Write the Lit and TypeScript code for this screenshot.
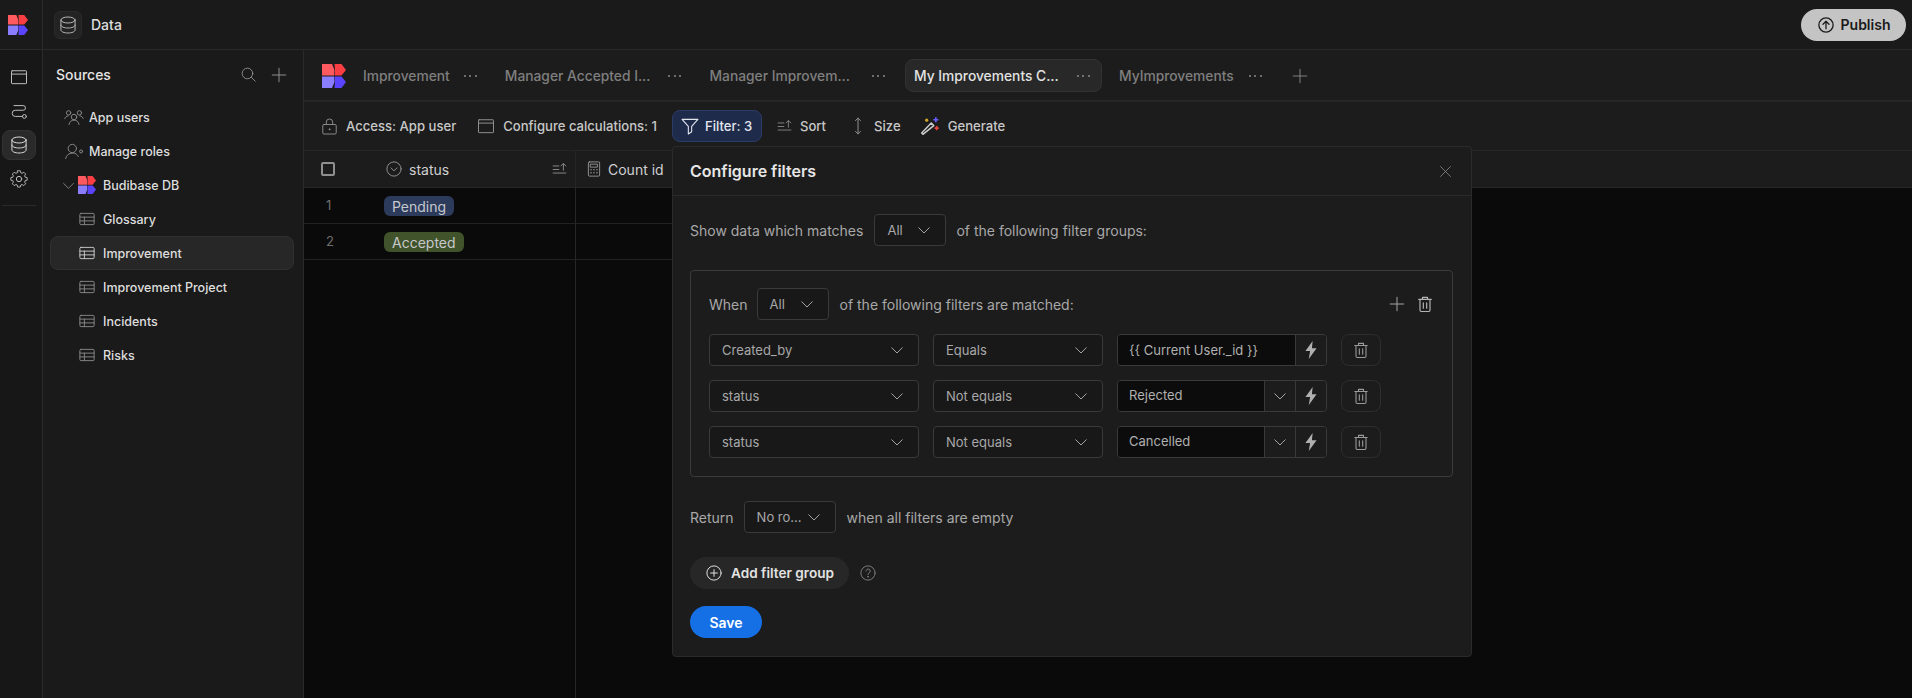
import { LitElement, html, css, svg } from "lit";
import { customElement } from "lit/decorators.js";

const ic = (size: number, body: unknown, color = "currentColor", sw = 1.2) => html`<svg class="ic" width=${size} height=${size} viewBox="0 0 24 24" fill="none" stroke=${color} stroke-width=${sw} stroke-linecap="round" stroke-linejoin="round">${body}</svg>`;

const dbP = svg`<ellipse cx="12" cy="6" rx="8.5" ry="3.6"/><path d="M3.5 6v6c0 2 3.8 3.6 8.5 3.6s8.5-1.6 8.5-3.6V6"/><path d="M3.5 12v6c0 2 3.8 3.6 8.5 3.6s8.5-1.6 8.5-3.6v-6"/>`;
const browserP = svg`<rect x="3" y="4.500" width="18" height="15.500" rx=".8"/><path d="M3 8.500h18"/>`;
const pathP = svg`<path d="M6 5.500h11a2.800 2.800 0 0 1 0 5.600H7.500a3.700 3.700 0 0 0 0 7.400H16"/><circle cx="18.500" cy="18.500" r="2.300"/>`;
const gearP = svg`<circle cx="12" cy="12" r="3.200"/><path d="M10.300 2.800h3.400l.6 2.600 1.700.7 2.300-1.400 2.400 2.400-1.400 2.300.7 1.700 2.600.6v3.400l-2.600.6-.7 1.700 1.400 2.300-2.400 2.400-2.300-1.400-1.700.7-.6 2.600h-3.400l-.6-2.600-1.700-.7-2.300 1.400-2.400-2.400 1.400-2.300-.7-1.700-2.600-.6v-3.400l2.600-.6.7-1.700-1.400-2.300 2.400-2.400 2.300 1.400 1.700-.7z" transform="translate(12 12) scale(.92) translate(-12 -13.500)"/>`;
const searchP = svg`<circle cx="10.500" cy="10.500" r="7.500"/><path d="M16 16l5.500 5.500"/>`;
const plusP = svg`<path d="M12 3v18M3 12h18"/>`;
const tableP = svg`<rect x="2.500" y="4.500" width="19" height="15" rx="1.500"/><path d="M2.500 9.500h19M2.500 14.500h19M8.500 9.500v10"/>`;
const chevP = svg`<path d="M5 9l7 7 7-7"/>`;
const lockP = svg`<rect x="3.500" y="9.500" width="17" height="12" rx="1.500"/><path d="M8 9.500V6.500a4 4 0 0 1 8 0v3"/><circle cx="12" cy="15.500" r=".6" fill="currentColor"/>`;
const filterP = svg`<path d="M2.500 4h19l-7.500 8.500V19l-4 2.500v-9z"/>`;
const sortP = svg`<path d="M3 7h8M3 12h8M3 17h18M17.500 13V4M14 7l3.500-3.500L21 7"/>`;
const sizeP = svg`<path d="M12 2.500v19M9 5.500l3-3 3 3M9 18.500l3 3 3-3"/>`;
const trashP = svg`<path d="M4.500 6.500h15M9 6.500V4h6v2.500M6 6.500v13a1.500 1.500 0 0 0 1.500 1.500h9a1.500 1.500 0 0 0 1.500-1.500v-13"/><path d="M10 10.500v6.500M14 10.500v6.500"/>`;
const closeP = svg`<path d="M4 4l16 16M20 4L4 20"/>`;
const plusCircP = svg`<circle cx="12" cy="12" r="9.500"/><path d="M12 7.500v9M7.500 12h9"/>`;
const helpP = svg`<circle cx="12" cy="12" r="9.500"/><path d="M9.300 9.500a2.800 2.800 0 1 1 4.300 2.300c-1 .7-1.600 1.200-1.600 2.400"/><circle cx="12" cy="17" r=".5" fill="currentColor"/>`;
const upP = svg`<circle cx="12" cy="12" r="9.500"/><path d="M12 17V7.500M8 11l4-4 4 4"/>`;
const usersP = svg`<circle cx="12" cy="12" r="3.300"/><path d="M6 21c.5-3.500 3-5.200 6-5.200s5.500 1.700 6 5.200"/><circle cx="5.500" cy="7" r="2.600"/><circle cx="18.500" cy="7" r="2.600"/><path d="M1 14c.4-2 2-3.300 4-3.300M23 14c-.4-2-2-3.300-4-3.300"/>`;
const roleP = svg`<circle cx="10" cy="9" r="5"/><path d="M2 21c.8-4 4-6.500 8-6.500s6.200 1.500 7 4"/><circle cx="20.500" cy="12.500" r="1.800"/>`;
const calcP = svg`<rect x="4.500" y="2.500" width="15" height="19" rx="1.500"/><rect x="7.500" y="5.500" width="9" height="4"/><path d="M8 13h.01M12 13h.01M16 13h.01M8 17h.01M12 17h.01M16 17h.01" stroke-width="2"/>`;
const statusP = svg`<circle cx="12" cy="12" r="9.500"/><path d="M8 10.500l4 4 4-4"/>`;

const boltIcon = html`<svg class="ic" width="18" height="20" viewBox="0 0 16 18"><path d="M9.500 1L3 10h4.200L6 17l7-9.500H8.800z" fill="#b0b0b0"/></svg>`;

const logo = (s: number) => html`<svg class="ic" width=${s} height=${s} viewBox="0 0 24 24">
  <path d="M0 0h10l2.500 6-.5 5.500H0z" fill="#FF5A5F"/><path d="M12.500 0h7l4.500 6-4.500 5.500h-7L13 6z" fill="#F83E43"/>
  <path d="M0 12.500h12l.5 5.500-2.500 6H0z" fill="#8B7DFF"/><path d="M12.500 12.500h7L24 18l-4.500 6h-7L13 18z" fill="#5B44FF"/>
</svg>`;

@customElement("app-root")
export class AppRoot extends LitElement {
  static styles = css`
    :host { display: block; width: 1912px; height: 698px; overflow: hidden; position: relative; font-family: Inter, "Noto Sans", sans-serif; color: #d6d6d6; background: #1a1a1a; font-size: 14px; }
    .ic { display: block; flex: none; }
    .top { height: 49px; display: flex; align-items: center; border-bottom: 1px solid #2a2a2a; }
    .top-logo { height: 49px; display: flex; align-items: center; padding-left: 8px; box-sizing: border-box; border-right: 1px solid #2a2a2a; flex: none; width: 43px; }
    .data-btn { width: 26px; height: 26px; margin-left: 11px; border: 1px solid #2a2a2a; background: #232323; border-radius: 6px; display: flex; align-items: center; justify-content: center; color: #b5b5b5; }
    .data-label { margin-left: 9px; font-size: 14px; font-weight: 500; color: #dedede; }
    .publish { margin-left: auto; margin-right: 6px; width: 105px; height: 32px; border-radius: 16px; background: #c4c4c4; color: #1a1a1a; display: flex; align-items: center; justify-content: center; gap: 6px; font-weight: 600; font-size: 14px; }
    .body { display: flex; height: 648px; }
    .rail { width: 42px; border-right: 1px solid #2a2a2a; background: #171717; flex: none; box-sizing: content-box; display: flex; flex-direction: column; align-items: flex-start; padding-top: 12px; color: #bcbcbc; }
    .rail-item { width: 34px; height: 30px; margin: 0 0 4px 2px; display: flex; align-items: center; justify-content: center; border-radius: 8px; border: 1px solid transparent; box-sizing: border-box; }
    .rail-item.on { background: #2a2a2a; border-color: #333; color: #d8d8d8; }
    .rail-div { width: 34px; height: 1px; background: #2a2a2a; margin: 7px 0 0 2px; }
    .side { width: 260px; border-right: 1px solid #2a2a2a; flex: none; box-sizing: content-box; background: #1a1a1a; }
    .side-head { display: flex; align-items: center; height: 49px; margin-bottom: 1px; padding: 0 15px 0 13px; color: #e4e4e4; font-size: 14px; font-weight: 500; }
    .side-head span { flex: 1; }
    .side-head .ic { color: #9a9a9a; }
    .side-head .ic + .ic { margin-left: 13px; }
    .list { display: flex; flex-direction: column; padding: 0 9px 0 7px; }
    .item { height: 34px; display: flex; align-items: center; font-size: 12.500px; color: #dedede; border: 1px solid transparent; border-radius: 8px; box-sizing: border-box; font-weight: 500; }
    .item .ic { color: #8d8d8d; }
    .item.on { background: #272727; border-color: #303030; }
    .item.on .ic { color: #d4d4d4; }
    .main { flex: 1; min-width: 0; display: flex; flex-direction: column; background: #0a0a0a; }
    .tabs { flex: none; background: #1c1c1c; border-bottom: 2px solid #262626; display: flex; align-items: center; padding: 1px 0 0 18px; box-sizing: border-box; height: 52px; }
    .tab { display: flex; align-items: center; height: 33px; font-size: 13.800px; color: #7f7f7f; border: 1px solid transparent; border-radius: 8px; box-sizing: border-box; padding: 0 8px; font-weight: 500; flex: none; }
    .tab.on { background: #282828; border-color: #323232; color: #e2e2e2; font-weight: 450; }
    .dots { display: flex; gap: 3.500px; color: #8a8a8a; margin-left: 14px; }
    .dots i { width: 2px; height: 2px; border-radius: 50%; background: currentColor; display: block; }
    .tool { height: 48px; flex: none; background: #1c1c1c; border-bottom: 1px solid #262626; display: flex; align-items: center; padding-left: 16px; font-size: 13.100px; font-weight: 500; color: #c8c8c8; }
    .tbtn { display: flex; align-items: center; gap: 7px; height: 32px; color: #c8c8c8; flex: none; }
    .tbtn .ic { color: #8f8f8f; }
    .tbtn.filter { width: 90px; gap: 5px; background: #1f2b4b; border: 1px solid #2c3c68; border-radius: 8px; box-sizing: border-box; padding: 0 0 0 7px; color: #e3e6ee; }
    .tbtn.filter .ic { color: #e3e6ee; }
    .grid { flex: 1; display: flex; min-height: 0; }
    .col { flex: none; display: flex; flex-direction: column; }
    .col.status { border-right: 1px solid #262626; }
    .hcell { height: 36px; flex: none; box-sizing: content-box; background: #1c1c1c; border-bottom: 1px solid #262626; display: flex; align-items: center; font-size: 14px; color: #cfcfcf; }
    .rcell { height: 36px; box-sizing: border-box; border-bottom: 1px solid #222; display: flex; align-items: center; font-size: 13px; color: #6f6f6f; }
    .rcell.num { padding: 0 0 1px 22px; }
    .check { width: 14px; height: 14px; border: 2px solid #8f8f8f; border-radius: 2px; box-sizing: border-box; margin-left: 17px; }
    .pill { height: 20px; border-radius: 6px; padding: 0 8px; display: flex; align-items: center; font-size: 14px; color: #c6c8cc; margin: 1px 0 0 8px; }
    .pill.blue { background: #2c3b5c; }
    .pill.green { background: #41532b; }
    .modal { position: absolute; left: 672px; top: 146px; width: 800px; height: 511px; box-sizing: border-box; background: #1c1c1c; border: 1px solid #2a2a2a; border-radius: 4px; display: flex; flex-direction: column; }
    .m-head { height: 48px; flex: none; border-bottom: 1px solid #2a2a2a; display: flex; align-items: center; justify-content: space-between; padding: 0 18px 0 17px; font-size: 16px; font-weight: 600; color: #e6e6e6; }
    .m-head .ic { color: #8f8f8f; }
    .m-body { padding: 18px 18px 0 17px; display: flex; flex-direction: column; font-size: 14px; color: #a8a8a8; }
    .line { display: flex; align-items: center; gap: 11px; height: 32px; }
    .line.show .sel { margin-right: -1px; }
    .sel { display: flex; align-items: center; justify-content: space-between; height: 32px; box-sizing: border-box; border: 1px solid #3a3a3a; border-radius: 4px; background: #181818; padding: 0 12px; font-size: 13px; color: #a8a8a8; flex: none; }
    .sel .ic { color: #a8a8a8; }
    .group { margin-top: 24px; height: 207px; box-sizing: border-box; border: 1px solid #3a3a3a; border-radius: 4px; padding: 17px 17px 0 18px; }
    .group .line { font-size: 14px; color: #a8a8a8; gap: 11px; }
    .when { margin-right: -2px; }
    .group-acts { margin-left: auto; display: flex; gap: 9px; align-items: center; color: #a8a8a8; }
    .frow { display: flex; gap: 14px; margin-top: 14px; height: 32px; }
    .val { width: 210px; height: 32px; box-sizing: border-box; border: 1px solid #3a3a3a; border-radius: 4px; display: flex; overflow: hidden; flex: none; font-size: 13px; color: #b0b0b0; }
    .val .txt { flex: 1; background: #0c0c0c; display: flex; align-items: center; padding-left: 11px; min-width: 0; }
    .val .txt.drop { padding-bottom: 2px; }
    .val .seg { width: 31px; box-sizing: border-box; flex: none; border-left: 1px solid #3a3a3a; display: flex; align-items: center; justify-content: center; background: #1c1c1c; }
    .val .seg .ic { color: #a8a8a8; }
    .del { width: 40px; height: 32px; box-sizing: border-box; border: 1px solid #2e2e2e; border-radius: 8px; display: flex; align-items: center; justify-content: center; color: #9a9a9a; flex: none; }
    .ret { margin-top: 24px; }
    .ret .first { margin-right: -1px; }
    .addrow { display: flex; align-items: center; gap: 10px; margin-top: 24px; }
    .add { height: 32px; width: 159px; border-radius: 16px; background: #272727; display: flex; align-items: center; justify-content: center; gap: 8px; font-size: 13.600px; font-weight: 600; color: #e2e2e2; }
    .help { color: #7d7d7d; }
    .save { margin-top: 17px; width: 72px; height: 32px; border-radius: 16px; background: #1570e6; color: #fff; font-weight: 600; font-size: 14px; display: flex; align-items: center; justify-content: center; }
  `;

  private dots(m = 14) { return html`<span class="dots" style="margin-left:${m}px"><i></i><i></i><i></i></span>`; }
  private sel(w: number, t: string) { return html`<div class="sel" style="width:${w}px"><span>${t}</span>${ic(18, chevP, "currentColor", 1.3)}</div>`; }
  private row(a: string, b: string, value: string, drop: boolean) {
    return html`<div class="frow">
      ${this.sel(210, a)}${this.sel(170, b)}
      <div class="val"><div class="txt ${drop ? "drop" : ""}">${value}</div>
        ${drop ? html`<div class="seg">${ic(18, chevP, "currentColor", 1.3)}</div>` : null}
        <div class="seg">${boltIcon}</div></div>
      <div class="del">${ic(20, trashP, "currentColor", 1.3)}</div>
    </div>`;
  }

  render() {
    const sideItem = (name: string, icon: unknown, on = false) => html`<div class="item ${on ? "on" : ""}" style="padding-left:27px;gap:7px">${ic(18, icon, "currentColor", 1.2)}<span>${name}</span></div>`;
    return html`
      <div class="top">
        <div class="top-logo">${logo(20)}</div>
        <div class="data-btn">${ic(20, dbP)}</div>
        <div class="data-label">Data</div>
        <div class="publish">${ic(18, upP, "currentColor", 1.7)}Publish</div>
      </div>
      <div class="body">
        <div class="rail">
          <div class="rail-item">${ic(20, browserP)}</div>
          <div class="rail-item">${ic(20, pathP)}</div>
          <div class="rail-item on">${ic(20, dbP)}</div>
          <div class="rail-item">${ic(20, gearP)}</div>
          <div class="rail-div"></div>
        </div>
        <div class="side">
          <div class="side-head"><span>Sources</span>${ic(17, searchP)}${ic(18, plusP)}</div>
          <div class="list">
            <div class="item" style="padding-left:13px;gap:5px">${ic(20, usersP, "currentColor", 1.1)}<span>App users</span></div>
            <div class="item" style="padding-left:13px;gap:5px">${ic(20, roleP, "currentColor", 1.1)}<span>Manage roles</span></div>
            <div class="item" style="padding-left:9px;gap:1px">${ic(17, chevP)}${logo(18)}<span style="margin-left:6px">Budibase DB</span></div>
            ${sideItem("Glossary", tableP)}
            ${sideItem("Improvement", tableP, true)}
            ${sideItem("Improvement Project", tableP)}
            ${sideItem("Incidents", tableP)}
            ${sideItem("Risks", tableP)}
          </div>
        </div>
        <div class="main">
          <div class="tabs">
            ${logo(24)}
            <div class="tab" style="margin-left:8px">Improvement${this.dots()}</div>
            <div class="tab" style="margin-left:10px">Manager Accepted I...${this.dots(18)}</div>
            <div class="tab" style="margin-left:10px">Manager Improvem...${this.dots(22)}</div>
            <div class="tab on" style="margin-left:11px;width:197px">My Improvements C...${this.dots(18)}</div>
            <div class="tab" style="margin-left:8px">MyImprovements${this.dots(15)}</div>
            <div style="margin-left:20px;color:#8a8a8a">${ic(18, plusP)}</div>
          </div>
          <div class="tool">
            <div class="tbtn">${ic(19, lockP)}Access: App user</div>
            <div class="tbtn" style="margin-left:20px">${ic(20, browserP)}Configure calculations: 1</div>
            <div class="tbtn filter" style="margin-left:15px">${ic(20, filterP, "currentColor", 1.3)}Filter: 3</div>
            <div class="tbtn" style="margin-left:14px">${ic(17, sortP)}Sort</div>
            <div class="tbtn" style="margin-left:22px;gap:6px">${ic(20, sizeP)}Size</div>
            <div class="tbtn" style="margin-left:19px;gap:8px">
              <svg class="ic" width="20" height="20" viewBox="0 0 24 24" fill="none"><path d="M3.500 22l-1.500-1.500L13.500 8.500l3 3z" stroke="#cfcfcf" stroke-width="1.700" stroke-linejoin="round"/><circle cx="8" cy="5" r="2" fill="#c9a227"/><path d="M19 1.500v6M16 4.500h6" stroke="#6a5cff" stroke-width="2"/><path d="M20 12v5M17.500 14.500h5" stroke="#e5443b" stroke-width="2"/></svg>
              Generate</div>
          </div>
          <div class="grid">
            <div class="col" style="width:72px">
              <div class="hcell"><div class="check"></div></div>
              <div class="rcell num">1</div>
              <div class="rcell num">2</div>
            </div>
            <div class="col status" style="width:199px">
              <div class="hcell" style="padding-left:9px;gap:6px;">${ic(18, statusP, "#9a9a9a", 1.2)}<span style="flex:1">status</span><span style="margin-right:7px">${ic(17, sortP, "#9a9a9a", 1.2)}</span></div>
              <div class="rcell"><span class="pill blue">Pending</span></div>
              <div class="rcell"><span class="pill green">Accepted</span></div>
            </div>
            <div class="col" style="width:400px">
              <div class="hcell" style="padding-left:9px;gap:5px">${ic(18, calcP, "#9a9a9a", 1.2)}Count id</div>
              <div class="rcell"></div>
              <div class="rcell"></div>
            </div>
            <div class="col" style="flex:1"><div class="hcell"></div></div>
          </div>
        </div>
      </div>
      <div class="modal">
        <div class="m-head"><span>Configure filters</span>${ic(15, closeP)}</div>
        <div class="m-body">
          <div class="line show">Show data which matches ${this.sel(72, "All")} of the following filter groups:</div>
          <div class="group">
            <div class="line"><span class="when">When</span> ${this.sel(72, "All")} of the following filters are matched:
              <div class="group-acts">${ic(18, plusP, "#a8a8a8", 1.3)}${ic(20, trashP, "#b4b4b4", 1.4)}</div></div>
            ${this.row("Created_by", "Equals", "{{ Current User._id }}", false)}
            ${this.row("status", "Not equals", "Rejected", true)}
            ${this.row("status", "Not equals", "Cancelled", true)}
          </div>
          <div class="line ret"><span class="first">Return</span> ${this.sel(92, "No ro...")} when all filters are empty</div>
          <div class="addrow"><div class="add">${ic(18, plusCircP, "#e2e2e2", 1.3)}Add filter group</div><span class="help">${ic(18, helpP, "currentColor", 1.3)}</span></div>
          <div class="save">Save</div>
        </div>
      </div>
    `;
  }
}
